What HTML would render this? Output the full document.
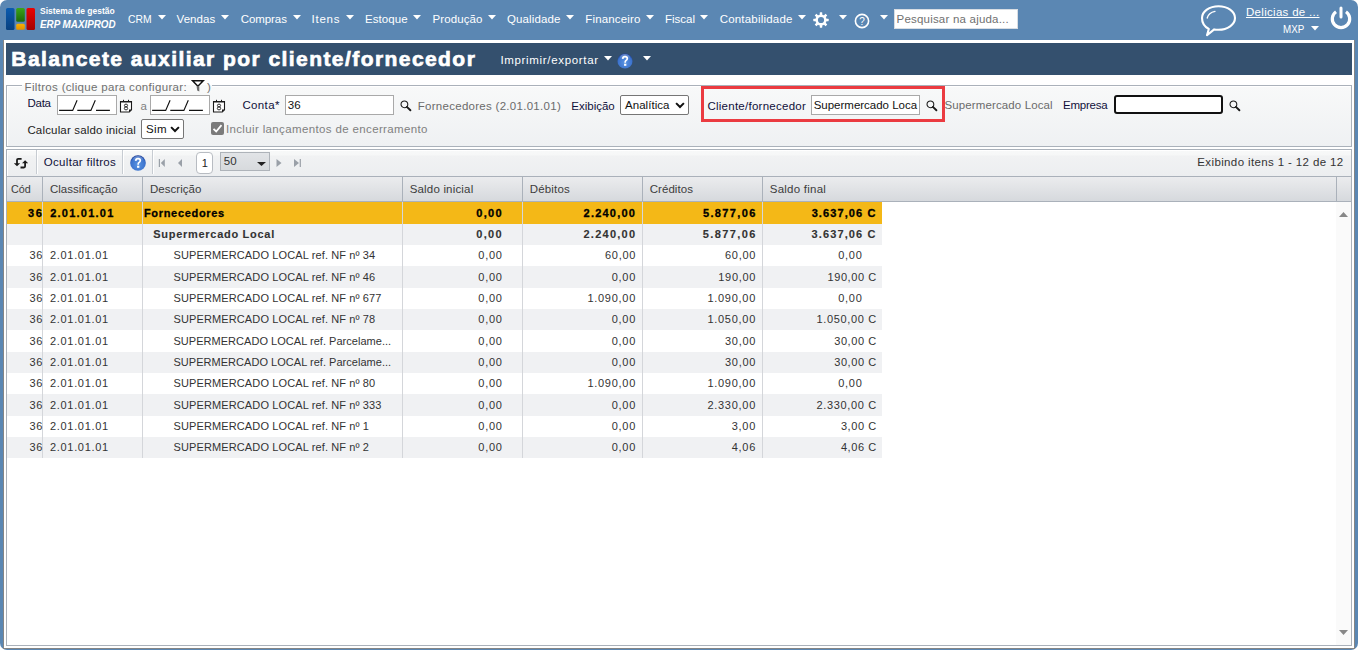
<!DOCTYPE html><html><head><meta charset="utf-8"><style>
*{box-sizing:border-box}
html,body{margin:0;padding:0;width:1358px;height:650px;overflow:hidden;background:#fff;font-family:"Liberation Sans",sans-serif}
#win{position:absolute;left:0;top:0;width:1358px;height:650px;background:#5b87b3;border-radius:7px;overflow:hidden}
.t{position:absolute;white-space:nowrap;line-height:1;font-family:"Liberation Sans",sans-serif}
.b{position:absolute}
svg{position:absolute;overflow:visible}
</style></head><body><div id="win"><svg style="left:0;top:0" width="40" height="40">
<defs>
<linearGradient id="lgB" x1="0" y1="0" x2="0" y2="1"><stop offset="0" stop-color="#0b5bb0"/><stop offset="1" stop-color="#08407f"/></linearGradient>
<linearGradient id="lgG" x1="0" y1="0" x2="0" y2="1"><stop offset="0" stop-color="#3ba51a"/><stop offset="1" stop-color="#1d6a09"/></linearGradient>
<linearGradient id="lgY" x1="0" y1="0" x2="0" y2="1"><stop offset="0" stop-color="#f7b000"/><stop offset="1" stop-color="#e39000"/></linearGradient>
<linearGradient id="lgR" x1="0" y1="0" x2="0" y2="1"><stop offset="0" stop-color="#ea0303"/><stop offset="1" stop-color="#a30202"/></linearGradient>
</defs>
<rect x="6" y="8" width="8.5" height="22" rx="1.5" fill="url(#lgB)"/>
<rect x="16.2" y="8" width="8.6" height="13.8" rx="1.5" fill="url(#lgG)"/>
<rect x="16.2" y="23.8" width="8.6" height="6" rx="1.5" fill="url(#lgY)"/>
<rect x="26.5" y="8" width="8.5" height="22" rx="1.5" fill="url(#lgR)"/>
</svg>
<div class="t" style="left:40.00px;top:7.31px;font-size:9.2px;color:#fff;font-weight:bold;transform:scaleX(0.9252);transform-origin:0.00px 0;">Sistema de gestão</div>
<div class="t" style="left:40.00px;top:19.19px;font-size:11px;color:#fff;font-weight:bold;font-style:italic;transform:scaleX(0.8940);transform-origin:0.00px 0;">ERP MAXIPROD</div>
<div class="t" style="left:128.30px;top:13.97px;font-size:11.5px;color:#fff;transform:scaleX(0.8981);transform-origin:0.00px 0;">CRM</div>
<svg style="left:158px;top:14.8px" width="8" height="4.5"><path d="M0 0H8L4.0 4.5Z" fill="#fff"/></svg>
<div class="t" style="left:176.60px;top:13.97px;font-size:11.5px;color:#fff;letter-spacing:0.036px;">Vendas</div>
<svg style="left:221px;top:14.8px" width="8" height="4.5"><path d="M0 0H8L4.0 4.5Z" fill="#fff"/></svg>
<div class="t" style="left:240.70px;top:13.97px;font-size:11.5px;color:#fff;letter-spacing:-0.067px;">Compras</div>
<svg style="left:292.8px;top:14.8px" width="8" height="4.5"><path d="M0 0H8L4.0 4.5Z" fill="#fff"/></svg>
<div class="t" style="left:311.50px;top:13.97px;font-size:11.5px;color:#fff;letter-spacing:0.755px;">Itens</div>
<svg style="left:345.6px;top:14.8px" width="8" height="4.5"><path d="M0 0H8L4.0 4.5Z" fill="#fff"/></svg>
<div class="t" style="left:365.00px;top:13.97px;font-size:11.5px;color:#fff;letter-spacing:0.083px;">Estoque</div>
<svg style="left:413px;top:14.8px" width="8" height="4.5"><path d="M0 0H8L4.0 4.5Z" fill="#fff"/></svg>
<div class="t" style="left:432.50px;top:13.97px;font-size:11.5px;color:#fff;letter-spacing:0.095px;">Produção</div>
<svg style="left:488px;top:14.8px" width="8" height="4.5"><path d="M0 0H8L4.0 4.5Z" fill="#fff"/></svg>
<div class="t" style="left:507.00px;top:13.97px;font-size:11.5px;color:#fff;letter-spacing:0.121px;">Qualidade</div>
<svg style="left:565.6px;top:14.8px" width="8" height="4.5"><path d="M0 0H8L4.0 4.5Z" fill="#fff"/></svg>
<div class="t" style="left:585.30px;top:13.97px;font-size:11.5px;color:#fff;letter-spacing:0.156px;">Financeiro</div>
<svg style="left:646px;top:14.8px" width="8" height="4.5"><path d="M0 0H8L4.0 4.5Z" fill="#fff"/></svg>
<div class="t" style="left:665.00px;top:13.97px;font-size:11.5px;color:#fff;letter-spacing:-0.015px;">Fiscal</div>
<svg style="left:700px;top:14.8px" width="8" height="4.5"><path d="M0 0H8L4.0 4.5Z" fill="#fff"/></svg>
<div class="t" style="left:719.70px;top:13.97px;font-size:11.5px;color:#fff;letter-spacing:0.197px;">Contabilidade</div>
<svg style="left:797.8px;top:14.8px" width="8" height="4.5"><path d="M0 0H8L4.0 4.5Z" fill="#fff"/></svg>
<svg style="left:812px;top:11px" width="18" height="18" viewBox="0 0 18 18"><g transform="translate(9,9)" fill="#fff"><circle r="4.35" fill="none" stroke="#fff" stroke-width="2.5"/><rect x="-1.25" y="-7.7" width="2.5" height="3.2" rx="0.4" transform="rotate(0)"/><rect x="-1.25" y="-7.7" width="2.5" height="3.2" rx="0.4" transform="rotate(45)"/><rect x="-1.25" y="-7.7" width="2.5" height="3.2" rx="0.4" transform="rotate(90)"/><rect x="-1.25" y="-7.7" width="2.5" height="3.2" rx="0.4" transform="rotate(135)"/><rect x="-1.25" y="-7.7" width="2.5" height="3.2" rx="0.4" transform="rotate(180)"/><rect x="-1.25" y="-7.7" width="2.5" height="3.2" rx="0.4" transform="rotate(225)"/><rect x="-1.25" y="-7.7" width="2.5" height="3.2" rx="0.4" transform="rotate(270)"/><rect x="-1.25" y="-7.7" width="2.5" height="3.2" rx="0.4" transform="rotate(315)"/></g></svg>
<svg style="left:839.3px;top:14.8px" width="8" height="4.5"><path d="M0 0H8L4.0 4.5Z" fill="#fff"/></svg>
<svg style="left:854px;top:12.5px" width="16" height="16" viewBox="0 0 16 16"><circle cx="8" cy="8" r="6.6" fill="none" stroke="#fff" stroke-width="1.6"/><text x="8" y="12" font-family="Liberation Sans" font-size="10" fill="#fff" text-anchor="middle">?</text></svg>
<svg style="left:880px;top:14.8px" width="8" height="4.5"><path d="M0 0H8L4.0 4.5Z" fill="#fff"/></svg>
<div class="b" style="left:894px;top:9px;width:124px;height:20px;background:#fff;border:1px solid #d8dde3"></div>
<div class="t" style="left:896.50px;top:13.77px;font-size:11.5px;color:#707070;letter-spacing:0.208px;">Pesquisar na ajuda...</div>
<svg style="left:1200px;top:4px" width="38" height="34" viewBox="0 0 38 34"><path d="M18.5 2.2C27.6 2.2 35 7.5 35 14S27.6 25.8 18.5 25.8c-1.5 0-3-.1-4.3-.4L7 31.2l1.8-6.2C4.8 22.8 2 18.8 2 14 2 7.5 9.4 2.2 18.5 2.2z" fill="none" stroke="#fff" stroke-width="2.1" stroke-linejoin="round"/><path d="M7.2 14C8 10.8 11.2 8.2 15 7.4" fill="none" stroke="#fff" stroke-width="1.3" stroke-linecap="round"/></svg>
<div class="t" style="left:1246.00px;top:6.77px;font-size:11.5px;color:#fff;letter-spacing:0.298px;text-decoration:underline;">Delicias de ...</div>
<div class="t" style="left:1283.00px;top:23.77px;font-size:11.5px;color:#fff;transform:scaleX(0.8515);transform-origin:0.00px 0;">MXP</div>
<svg style="left:1311px;top:25.5px" width="8" height="4.5"><path d="M0 0H8L4.0 4.5Z" fill="#fff"/></svg>
<svg style="left:1328px;top:5px" width="26" height="26" viewBox="0 0 26 26"><path d="M8.01 6.77A8.7 8.7 0 1 0 17.99 6.77" fill="none" stroke="#fff" stroke-width="3.2"/><path d="M13 2.9V12" stroke="#fff" stroke-width="3" stroke-linecap="round"/></svg>
<div class="b" style="left:3px;top:40px;width:1352px;height:609px;background:#fff;border-left:1px solid #858585;border-right:1px solid #858585;border-bottom:1px solid #858585"></div>
<div class="b" style="left:6px;top:43px;width:1346px;height:32px;background:#34506e"></div>
<div class="t" style="left:11.35px;top:48.42px;font-size:21px;color:#fff;font-weight:bold;letter-spacing:1.433px;-webkit-text-stroke:0.7px #fff;">Balancete auxiliar por cliente/fornecedor</div>
<div class="t" style="left:500.40px;top:54.97px;font-size:11.5px;color:#fff;letter-spacing:0.677px;">Imprimir/exportar</div>
<svg style="left:603.7px;top:56px" width="8" height="4.5"><path d="M0 0H8L4.0 4.5Z" fill="#fff"/></svg>
<svg style="left:617px;top:53px" width="16" height="16" viewBox="0 0 16 16"><defs><radialGradient id="hb" cx="0.5" cy="0.62" r="0.6"><stop offset="0" stop-color="#5b95e2"/><stop offset="0.78" stop-color="#3b72cd"/><stop offset="1" stop-color="#1c3f99"/></radialGradient><linearGradient id="hh" x1="0" y1="0" x2="0" y2="1"><stop offset="0" stop-color="#fff" stop-opacity="0.3"/><stop offset="1" stop-color="#fff" stop-opacity="0"/></linearGradient></defs><circle cx="8" cy="8" r="7.6" fill="url(#hb)"/><ellipse cx="8" cy="4" rx="5" ry="3" fill="url(#hh)"/><path d="M5.7 5.9Q5.8 3.6 8 3.6Q10.3 3.6 10.3 5.6Q10.3 6.8 9 7.5Q8.2 7.9 8.2 9.1V9.7" fill="none" stroke="#fff" stroke-width="1.7"/><rect x="7.05" y="10.7" width="2.3" height="2.1" fill="#fff"/></svg>
<svg style="left:643px;top:56px" width="8" height="4.5"><path d="M0 0H8L4.0 4.5Z" fill="#fff"/></svg>
<div class="b" style="left:6px;top:85px;width:1346px;height:62px;border:1px solid #aab1ba;background:linear-gradient(#f8f9f9,#eff1f3);box-shadow:inset 1px 1px 0 #fff"></div>
<div class="b" style="left:22px;top:80px;width:190px;height:12px;background:linear-gradient(#fff 0,#fff 5px,#f8f9f9 5px)"></div>
<div class="t" style="left:24.60px;top:82.27px;font-size:11.5px;color:#707070;letter-spacing:0.319px;">Filtros (clique para configurar:</div>
<svg style="left:186px;top:76px" width="28" height="20" viewBox="0 0 28 20"><path d="M6.6 4.8H17.2L11.9 10.2Z" fill="none" stroke="#111" stroke-width="1.5" stroke-linejoin="miter"/><path d="M10.6 10.2H13.3V15.4L11.2 14.6Z" fill="#6a6a6a"/></svg>
<div class="t" style="left:207.00px;top:82.27px;font-size:11.5px;color:#707070;">)</div>
<div class="t" style="left:27.40px;top:97.57px;font-size:11.5px;color:#10103a;letter-spacing:-0.232px;">Data</div>
<div class="b" style="left:57px;top:95px;width:60px;height:20px;background:#fff;border:1px solid #a9a9a9"></div>
<svg style="left:57px;top:95px" width="60" height="20" viewBox="0 0 60 20"><path d="M2.1 15.4H15.7L20.1 5.3M20.3 15.4H33.9L38.3 5.3M39 15.4H52.9" fill="none" stroke="#111" stroke-width="1.15"/></svg>
<svg style="left:119px;top:98.5px" width="14" height="14" viewBox="0 0 14 14"><path d="M1.5 2.5H12.5V10.8L10.3 13H1.5Z" fill="#fff" stroke="#1a1a1a" stroke-width="1.1"/><path d="M1 1.9H13V3.4H1Z" fill="#1a1a1a"/><path d="M4.5 0.8V2.2M9.5 0.8V2.2" stroke="#1a1a1a" stroke-width="1"/><path d="M10 13L12.7 10.5H10Z" fill="#1a1a1a"/><ellipse cx="7" cy="6.5" rx="1.6" ry="1.4" fill="none" stroke="#1a1a1a" stroke-width="0.9"/><ellipse cx="7" cy="9.4" rx="1.7" ry="1.5" fill="none" stroke="#1a1a1a" stroke-width="0.9"/></svg>
<div class="t" style="left:140.50px;top:100.77px;font-size:11.5px;color:#808080;">a</div>
<div class="b" style="left:150px;top:95px;width:60px;height:20px;background:#fff;border:1px solid #a9a9a9"></div>
<svg style="left:150px;top:95px" width="60" height="20" viewBox="0 0 60 20"><path d="M2.1 15.4H15.7L20.1 5.3M20.3 15.4H33.9L38.3 5.3M39 15.4H52.9" fill="none" stroke="#111" stroke-width="1.15"/></svg>
<svg style="left:212px;top:98.5px" width="14" height="14" viewBox="0 0 14 14"><path d="M1.5 2.5H12.5V10.8L10.3 13H1.5Z" fill="#fff" stroke="#1a1a1a" stroke-width="1.1"/><path d="M1 1.9H13V3.4H1Z" fill="#1a1a1a"/><path d="M4.5 0.8V2.2M9.5 0.8V2.2" stroke="#1a1a1a" stroke-width="1"/><path d="M10 13L12.7 10.5H10Z" fill="#1a1a1a"/><ellipse cx="7" cy="6.5" rx="1.6" ry="1.4" fill="none" stroke="#1a1a1a" stroke-width="0.9"/><ellipse cx="7" cy="9.4" rx="1.7" ry="1.5" fill="none" stroke="#1a1a1a" stroke-width="0.9"/></svg>
<div class="t" style="left:242.40px;top:100.37px;font-size:11.5px;color:#10103a;letter-spacing:0.363px;">Conta*</div>
<div class="b" style="left:285px;top:95px;width:109px;height:20px;background:#fff;border:1px solid #a9a9a9"></div>
<div class="t" style="left:287.80px;top:99.67px;font-size:11.5px;color:#111;">36</div>
<svg style="left:399.5px;top:99.5px" width="12" height="12" viewBox="0 0 12 12"><circle cx="4.4" cy="4.3" r="3.4" fill="none" stroke="#1a1a1a" stroke-width="1.05"/><path d="M6.9 6.9L10.4 10.3" stroke="#1a1a1a" stroke-width="1.9" stroke-linecap="round"/></svg>
<div class="t" style="left:417.70px;top:100.87px;font-size:11.5px;color:#6b6b6b;letter-spacing:0.286px;">Fornecedores (2.01.01.01)</div>
<div class="t" style="left:571.30px;top:101.27px;font-size:11.5px;color:#10103a;letter-spacing:-0.010px;">Exibição</div>
<div class="b" style="left:620px;top:95px;width:69px;height:20px;border-radius:2px;border:1px solid #767676;background:#fff"></div>
<div class="t" style="left:625.00px;top:99.87px;font-size:11.5px;color:#111;letter-spacing:0.049px;">Analítica</div>
<svg style="left:675px;top:101.5px" width="10" height="7" viewBox="0 0 10 7"><path d="M1.1 1.1L5 5L8.9 1.1" fill="none" stroke="#111" stroke-width="2"/></svg>
<div class="b" style="left:701px;top:86px;width:244px;height:36px;border:3px solid #eb3b41"></div>
<div class="t" style="left:707.40px;top:100.77px;font-size:11.5px;color:#10103a;letter-spacing:0.262px;">Cliente/fornecedor</div>
<div class="b" style="left:811px;top:95px;width:109px;height:20px;background:#fff;border:1px solid #a9a9a9"></div>
<div class="t" style="left:813.70px;top:99.77px;font-size:11.5px;color:#111;letter-spacing:-0.010px;">Supermercado Loca</div>
<svg style="left:925.5px;top:100px" width="12" height="12" viewBox="0 0 12 12"><circle cx="4.4" cy="4.3" r="3.4" fill="none" stroke="#1a1a1a" stroke-width="1.05"/><path d="M6.9 6.9L10.4 10.3" stroke="#1a1a1a" stroke-width="1.9" stroke-linecap="round"/></svg>
<div class="t" style="left:944.40px;top:100.47px;font-size:11.5px;color:#6b6b6b;letter-spacing:0.126px;">Supermercado Local</div>
<div class="t" style="left:1063.00px;top:100.47px;font-size:11.5px;color:#10103a;letter-spacing:-0.237px;">Empresa</div>
<div class="b" style="left:1114px;top:95px;width:109px;height:19px;background:#fff;border:2px solid #111;border-radius:3px"></div>
<svg style="left:1228.5px;top:99.5px" width="12" height="12" viewBox="0 0 12 12"><circle cx="4.4" cy="4.3" r="3.4" fill="none" stroke="#1a1a1a" stroke-width="1.05"/><path d="M6.9 6.9L10.4 10.3" stroke="#1a1a1a" stroke-width="1.9" stroke-linecap="round"/></svg>
<div class="t" style="left:27.40px;top:125.37px;font-size:11.5px;color:#222;letter-spacing:0.168px;">Calcular saldo inicial</div>
<div class="b" style="left:141px;top:119px;width:43px;height:20px;border-radius:2px;border:1px solid #767676;background:#fff"></div>
<div class="t" style="left:146.10px;top:123.77px;font-size:11.5px;color:#111;letter-spacing:0.337px;">Sim</div>
<svg style="left:170px;top:125.5px" width="10" height="7" viewBox="0 0 10 7"><path d="M1.1 1.1L5 5L8.9 1.1" fill="none" stroke="#111" stroke-width="2"/></svg>
<svg style="left:211px;top:122px" width="13" height="13" viewBox="0 0 13 13"><rect x="0" y="0" width="13" height="13" rx="2" fill="#7b7b7b"/><path d="M2.5 6.8L5.2 9.5L10.5 3.2" fill="none" stroke="#fff" stroke-width="1.8"/></svg>
<div class="t" style="left:225.90px;top:123.97px;font-size:11.5px;color:#808080;letter-spacing:0.364px;">Incluir lançamentos de encerramento</div>
<div class="b" style="left:6px;top:149px;width:1346px;height:28px;border:1px solid #aab1ba;border-bottom:none;background:linear-gradient(#f8f9f9 0,#f6f7f7 5px,#f1f2f3 6px,#eceef0 100%);box-shadow:inset 1px 1px 0 #fff"></div>
<div class="b" style="left:36px;top:150px;width:1px;height:24px;background:#c7ccd2;box-shadow:1px 0 0 #fff"></div>
<div class="b" style="left:122px;top:150px;width:1px;height:24px;background:#c7ccd2;box-shadow:1px 0 0 #fff"></div>
<div class="b" style="left:152px;top:150px;width:1px;height:24px;background:#c7ccd2;box-shadow:1px 0 0 #fff"></div>
<svg style="left:10px;top:152px" width="24" height="20" viewBox="0 0 24 20"><path d="M7 12.5V8Q7 6.8 8.2 6.8H11.6" fill="none" stroke="#1a1a1a" stroke-width="1.8"/><path d="M3.8 11.2H10.2L7 14.2Z" fill="#1a1a1a"/><path d="M15.1 10V14.3Q15.1 15.5 13.9 15.5H10.5" fill="none" stroke="#1a1a1a" stroke-width="1.8"/><path d="M12 11.2H18.2L15.1 8.2Z" fill="#1a1a1a"/></svg>
<div class="t" style="left:43.80px;top:156.77px;font-size:11.5px;color:#10103a;letter-spacing:0.301px;">Ocultar filtros</div>
<svg style="left:130px;top:155px" width="16" height="16" viewBox="0 0 16 16"><circle cx="8" cy="8" r="7.8" fill="url(#hb)"/><ellipse cx="8" cy="4" rx="5" ry="3" fill="url(#hh)"/><path d="M5.7 5.9Q5.8 3.6 8 3.6Q10.3 3.6 10.3 5.6Q10.3 6.8 9 7.5Q8.2 7.9 8.2 9.1V9.7" fill="none" stroke="#fff" stroke-width="1.7"/><rect x="7.05" y="10.7" width="2.3" height="2.1" fill="#fff"/></svg>
<svg style="left:158px;top:158px" width="145" height="10" viewBox="0 0 145 10">
<path d="M1.4 1V9" stroke="#9aa0a8" stroke-width="1.2"/><path d="M6.8 1V9L2.8 5Z" fill="#9aa0a8"/>
<path d="M24 1V9L20 5Z" fill="#9aa0a8"/>
<path d="M118.5 1V9L123.5 5Z" fill="#9aa0a8"/>
<path d="M136 1V9L141 5Z" fill="#9aa0a8"/><path d="M142.3 1V9" stroke="#9aa0a8" stroke-width="1.2"/>
</svg>
<div class="b" style="left:196px;top:152px;width:17px;height:22px;background:#fff;border:1px solid #b8bcc2;border-radius:4px"></div>
<div class="t" style="left:201.70px;top:157.79px;font-size:11px;color:#222;">1</div>
<div class="b" style="left:220px;top:152px;width:50px;height:19px;background:linear-gradient(#e2e4e7,#d7dadd);border:1px solid #aeb3b9"></div>
<div class="t" style="left:223.80px;top:155.77px;font-size:11.5px;color:#333;">50</div>
<svg style="left:256.7px;top:161.5px" width="9" height="4"><path d="M0 0H9L4.5 4Z" fill="#222"/></svg>
<div class="t" style="left:1197.30px;top:156.77px;font-size:11.5px;color:#333;letter-spacing:0.374px;">Exibindo itens 1 - 12 de 12</div>
<div class="b" style="left:6px;top:176px;width:1346px;height:470px;border:1px solid #aab1ba;border-top:none;background:#fff"></div>
<div class="b" style="left:7px;top:176px;width:1344px;height:26px;background:linear-gradient(#ebecee,#d6d9dd);border-top:1px solid #aab1ba;border-bottom:1px solid #aab1ba"></div>
<div class="b" style="left:42px;top:177px;width:1px;height:24px;background:#aab1ba"></div>
<div class="b" style="left:142px;top:177px;width:1px;height:24px;background:#aab1ba"></div>
<div class="b" style="left:402px;top:177px;width:1px;height:24px;background:#aab1ba"></div>
<div class="b" style="left:522px;top:177px;width:1px;height:24px;background:#aab1ba"></div>
<div class="b" style="left:642px;top:177px;width:1px;height:24px;background:#aab1ba"></div>
<div class="b" style="left:762px;top:177px;width:1px;height:24px;background:#aab1ba"></div>
<div class="b" style="left:1336px;top:177px;width:1px;height:24px;background:#aab1ba"></div>
<div class="t" style="left:10.60px;top:183.77px;font-size:11.5px;color:#3c3c3c;transform:scaleX(0.9372);transform-origin:0.00px 0;">Cód</div>
<div class="t" style="left:50.00px;top:183.77px;font-size:11.5px;color:#3c3c3c;letter-spacing:-0.013px;">Classificação</div>
<div class="t" style="left:150.00px;top:183.77px;font-size:11.5px;color:#3c3c3c;letter-spacing:0.034px;">Descrição</div>
<div class="t" style="left:409.70px;top:183.77px;font-size:11.5px;color:#3c3c3c;letter-spacing:0.182px;">Saldo inicial</div>
<div class="t" style="left:529.80px;top:183.77px;font-size:11.5px;color:#3c3c3c;letter-spacing:0.160px;">Débitos</div>
<div class="t" style="left:649.70px;top:183.77px;font-size:11.5px;color:#3c3c3c;letter-spacing:0.061px;">Créditos</div>
<div class="t" style="left:769.80px;top:183.77px;font-size:11.5px;color:#3c3c3c;letter-spacing:0.235px;">Saldo final</div>
<div class="b" style="left:1336px;top:202px;width:15px;height:443px;background:#fafafa"></div>
<svg style="left:1339px;top:211.5px" width="9" height="5"><path d="M0 5H9L4.5 0Z" fill="#888"/></svg>
<svg style="left:1339px;top:630px" width="9" height="5"><path d="M0 0H9L4.5 5Z" fill="#888"/></svg>
<div class="b" style="left:7px;top:202px;width:875px;height:22px;background:#f4b817"></div>
<div class="b" style="left:7px;top:224px;width:875px;height:21px;background:#f0f1f3"></div>
<div class="b" style="left:7px;top:245px;width:875px;height:21px;background:#ffffff"></div>
<div class="b" style="left:7px;top:266px;width:875px;height:22px;background:#f0f1f3"></div>
<div class="b" style="left:7px;top:288px;width:875px;height:21px;background:#ffffff"></div>
<div class="b" style="left:7px;top:309px;width:875px;height:21px;background:#f0f1f3"></div>
<div class="b" style="left:7px;top:330px;width:875px;height:22px;background:#ffffff"></div>
<div class="b" style="left:7px;top:352px;width:875px;height:21px;background:#f0f1f3"></div>
<div class="b" style="left:7px;top:373px;width:875px;height:21px;background:#ffffff"></div>
<div class="b" style="left:7px;top:394px;width:875px;height:22px;background:#f0f1f3"></div>
<div class="b" style="left:7px;top:416px;width:875px;height:21px;background:#ffffff"></div>
<div class="b" style="left:7px;top:437px;width:875px;height:21px;background:#f0f1f3"></div>
<div class="b" style="left:42px;top:202px;width:1px;height:256.00px;background:#d4d6da"></div>
<div class="b" style="left:142px;top:202px;width:1px;height:256.00px;background:#d4d6da"></div>
<div class="b" style="left:402px;top:202px;width:1px;height:256.00px;background:#d4d6da"></div>
<div class="b" style="left:522px;top:202px;width:1px;height:256.00px;background:#d4d6da"></div>
<div class="b" style="left:642px;top:202px;width:1px;height:256.00px;background:#d4d6da"></div>
<div class="b" style="left:762px;top:202px;width:1px;height:256.00px;background:#d4d6da"></div>
<div class="t" style="left:28.09px;top:207.69px;font-size:11px;color:#000;font-weight:bold;letter-spacing:1.442px;-webkit-text-stroke:0.3px #000;">36</div>
<div class="t" style="left:50.15px;top:207.69px;font-size:11px;color:#000;font-weight:bold;letter-spacing:1.247px;-webkit-text-stroke:0.3px #000;">2.01.01.01</div>
<div class="t" style="left:143.95px;top:207.69px;font-size:11px;color:#000;font-weight:bold;letter-spacing:0.679px;-webkit-text-stroke:0.3px #000;">Fornecedores</div>
<div class="t" style="left:476.35px;top:207.69px;font-size:11px;color:#000;font-weight:bold;letter-spacing:1.269px;-webkit-text-stroke:0.3px #000;">0,00</div>
<div class="t" style="left:583.55px;top:207.69px;font-size:11px;color:#000;font-weight:bold;letter-spacing:1.228px;-webkit-text-stroke:0.3px #000;">2.240,00</div>
<div class="t" style="left:702.95px;top:207.69px;font-size:11px;color:#000;font-weight:bold;letter-spacing:1.371px;-webkit-text-stroke:0.3px #000;">5.877,06</div>
<div class="t" style="left:811.65px;top:207.69px;font-size:11px;color:#000;font-weight:bold;letter-spacing:1.103px;-webkit-text-stroke:0.3px #000;">3.637,06 C</div>
<div class="t" style="left:153.26px;top:229.19px;font-size:11px;color:#333;font-weight:bold;letter-spacing:0.713px;-webkit-text-stroke:0.12px #333;">Supermercado Local</div>
<div class="t" style="left:476.26px;top:229.19px;font-size:11px;color:#333;font-weight:bold;letter-spacing:1.329px;-webkit-text-stroke:0.12px #333;">0,00</div>
<div class="t" style="left:583.46px;top:229.19px;font-size:11px;color:#333;font-weight:bold;letter-spacing:1.254px;-webkit-text-stroke:0.12px #333;">2.240,00</div>
<div class="t" style="left:702.86px;top:229.19px;font-size:11px;color:#333;font-weight:bold;letter-spacing:1.397px;-webkit-text-stroke:0.12px #333;">5.877,06</div>
<div class="t" style="left:811.56px;top:229.19px;font-size:11px;color:#333;font-weight:bold;letter-spacing:1.123px;-webkit-text-stroke:0.12px #333;">3.637,06 C</div>
<div class="t" style="left:29.60px;top:250.19px;font-size:11px;color:#333;letter-spacing:0.482px;">36</div>
<div class="t" style="left:50.00px;top:250.19px;font-size:11px;color:#333;letter-spacing:0.681px;">2.01.01.01</div>
<div class="t" style="left:173.50px;top:250.19px;font-size:11px;color:#333;letter-spacing:0.120px;">SUPERMERCADO LOCAL ref. NF nº 34</div>
<div class="t" style="left:478.30px;top:250.19px;font-size:11px;color:#333;letter-spacing:0.736px;">0,00</div>
<div class="t" style="left:605.00px;top:250.19px;font-size:11px;color:#333;letter-spacing:0.698px;">60,00</div>
<div class="t" style="left:725.00px;top:250.19px;font-size:11px;color:#333;letter-spacing:0.698px;">60,00</div>
<div class="t" style="left:838.20px;top:250.19px;font-size:11px;color:#333;letter-spacing:0.736px;">0,00</div>
<div class="t" style="left:29.60px;top:271.69px;font-size:11px;color:#333;letter-spacing:0.482px;">36</div>
<div class="t" style="left:50.00px;top:271.69px;font-size:11px;color:#333;letter-spacing:0.681px;">2.01.01.01</div>
<div class="t" style="left:173.50px;top:271.69px;font-size:11px;color:#333;letter-spacing:0.120px;">SUPERMERCADO LOCAL ref. NF nº 46</div>
<div class="t" style="left:478.30px;top:271.69px;font-size:11px;color:#333;letter-spacing:0.736px;">0,00</div>
<div class="t" style="left:611.70px;top:271.69px;font-size:11px;color:#333;letter-spacing:0.736px;">0,00</div>
<div class="t" style="left:718.30px;top:271.69px;font-size:11px;color:#333;letter-spacing:0.675px;">190,00</div>
<div class="t" style="left:827.50px;top:271.69px;font-size:11px;color:#333;letter-spacing:0.586px;">190,00 C</div>
<div class="t" style="left:29.60px;top:293.19px;font-size:11px;color:#333;letter-spacing:0.482px;">36</div>
<div class="t" style="left:50.00px;top:293.19px;font-size:11px;color:#333;letter-spacing:0.681px;">2.01.01.01</div>
<div class="t" style="left:173.50px;top:293.19px;font-size:11px;color:#333;letter-spacing:0.120px;">SUPERMERCADO LOCAL ref. NF nº 677</div>
<div class="t" style="left:478.30px;top:293.19px;font-size:11px;color:#333;letter-spacing:0.736px;">0,00</div>
<div class="t" style="left:587.40px;top:293.19px;font-size:11px;color:#333;letter-spacing:0.728px;">1.090,00</div>
<div class="t" style="left:707.40px;top:293.19px;font-size:11px;color:#333;letter-spacing:0.728px;">1.090,00</div>
<div class="t" style="left:838.20px;top:293.19px;font-size:11px;color:#333;letter-spacing:0.736px;">0,00</div>
<div class="t" style="left:29.60px;top:314.19px;font-size:11px;color:#333;letter-spacing:0.482px;">36</div>
<div class="t" style="left:50.00px;top:314.19px;font-size:11px;color:#333;letter-spacing:0.681px;">2.01.01.01</div>
<div class="t" style="left:173.50px;top:314.19px;font-size:11px;color:#333;letter-spacing:0.120px;">SUPERMERCADO LOCAL ref. NF nº 78</div>
<div class="t" style="left:478.30px;top:314.19px;font-size:11px;color:#333;letter-spacing:0.736px;">0,00</div>
<div class="t" style="left:611.70px;top:314.19px;font-size:11px;color:#333;letter-spacing:0.736px;">0,00</div>
<div class="t" style="left:707.40px;top:314.19px;font-size:11px;color:#333;letter-spacing:0.728px;">1.050,00</div>
<div class="t" style="left:816.60px;top:314.19px;font-size:11px;color:#333;letter-spacing:0.647px;">1.050,00 C</div>
<div class="t" style="left:29.60px;top:335.69px;font-size:11px;color:#333;letter-spacing:0.482px;">36</div>
<div class="t" style="left:50.00px;top:335.69px;font-size:11px;color:#333;letter-spacing:0.681px;">2.01.01.01</div>
<div class="t" style="left:173.50px;top:335.69px;font-size:11px;color:#333;letter-spacing:0.030px;">SUPERMERCADO LOCAL ref. Parcelame...</div>
<div class="t" style="left:478.30px;top:335.69px;font-size:11px;color:#333;letter-spacing:0.736px;">0,00</div>
<div class="t" style="left:611.70px;top:335.69px;font-size:11px;color:#333;letter-spacing:0.736px;">0,00</div>
<div class="t" style="left:725.00px;top:335.69px;font-size:11px;color:#333;letter-spacing:0.698px;">30,00</div>
<div class="t" style="left:834.20px;top:335.69px;font-size:11px;color:#333;letter-spacing:0.586px;">30,00 C</div>
<div class="t" style="left:29.60px;top:357.19px;font-size:11px;color:#333;letter-spacing:0.482px;">36</div>
<div class="t" style="left:50.00px;top:357.19px;font-size:11px;color:#333;letter-spacing:0.681px;">2.01.01.01</div>
<div class="t" style="left:173.50px;top:357.19px;font-size:11px;color:#333;letter-spacing:0.030px;">SUPERMERCADO LOCAL ref. Parcelame...</div>
<div class="t" style="left:478.30px;top:357.19px;font-size:11px;color:#333;letter-spacing:0.736px;">0,00</div>
<div class="t" style="left:611.70px;top:357.19px;font-size:11px;color:#333;letter-spacing:0.736px;">0,00</div>
<div class="t" style="left:725.00px;top:357.19px;font-size:11px;color:#333;letter-spacing:0.698px;">30,00</div>
<div class="t" style="left:834.20px;top:357.19px;font-size:11px;color:#333;letter-spacing:0.586px;">30,00 C</div>
<div class="t" style="left:29.60px;top:378.19px;font-size:11px;color:#333;letter-spacing:0.482px;">36</div>
<div class="t" style="left:50.00px;top:378.19px;font-size:11px;color:#333;letter-spacing:0.681px;">2.01.01.01</div>
<div class="t" style="left:173.50px;top:378.19px;font-size:11px;color:#333;letter-spacing:0.120px;">SUPERMERCADO LOCAL ref. NF nº 80</div>
<div class="t" style="left:478.30px;top:378.19px;font-size:11px;color:#333;letter-spacing:0.736px;">0,00</div>
<div class="t" style="left:587.40px;top:378.19px;font-size:11px;color:#333;letter-spacing:0.728px;">1.090,00</div>
<div class="t" style="left:707.40px;top:378.19px;font-size:11px;color:#333;letter-spacing:0.728px;">1.090,00</div>
<div class="t" style="left:838.20px;top:378.19px;font-size:11px;color:#333;letter-spacing:0.736px;">0,00</div>
<div class="t" style="left:29.60px;top:399.69px;font-size:11px;color:#333;letter-spacing:0.482px;">36</div>
<div class="t" style="left:50.00px;top:399.69px;font-size:11px;color:#333;letter-spacing:0.681px;">2.01.01.01</div>
<div class="t" style="left:173.50px;top:399.69px;font-size:11px;color:#333;letter-spacing:0.120px;">SUPERMERCADO LOCAL ref. NF nº 333</div>
<div class="t" style="left:478.30px;top:399.69px;font-size:11px;color:#333;letter-spacing:0.736px;">0,00</div>
<div class="t" style="left:611.70px;top:399.69px;font-size:11px;color:#333;letter-spacing:0.736px;">0,00</div>
<div class="t" style="left:707.40px;top:399.69px;font-size:11px;color:#333;letter-spacing:0.728px;">2.330,00</div>
<div class="t" style="left:816.60px;top:399.69px;font-size:11px;color:#333;letter-spacing:0.647px;">2.330,00 C</div>
<div class="t" style="left:29.60px;top:421.19px;font-size:11px;color:#333;letter-spacing:0.482px;">36</div>
<div class="t" style="left:50.00px;top:421.19px;font-size:11px;color:#333;letter-spacing:0.681px;">2.01.01.01</div>
<div class="t" style="left:173.50px;top:421.19px;font-size:11px;color:#333;letter-spacing:0.120px;">SUPERMERCADO LOCAL ref. NF nº 1</div>
<div class="t" style="left:478.30px;top:421.19px;font-size:11px;color:#333;letter-spacing:0.736px;">0,00</div>
<div class="t" style="left:611.70px;top:421.19px;font-size:11px;color:#333;letter-spacing:0.736px;">0,00</div>
<div class="t" style="left:731.70px;top:421.19px;font-size:11px;color:#333;letter-spacing:0.736px;">3,00</div>
<div class="t" style="left:840.90px;top:421.19px;font-size:11px;color:#333;letter-spacing:0.587px;">3,00 C</div>
<div class="t" style="left:29.60px;top:442.19px;font-size:11px;color:#333;letter-spacing:0.482px;">36</div>
<div class="t" style="left:50.00px;top:442.19px;font-size:11px;color:#333;letter-spacing:0.681px;">2.01.01.01</div>
<div class="t" style="left:173.50px;top:442.19px;font-size:11px;color:#333;letter-spacing:0.120px;">SUPERMERCADO LOCAL ref. NF nº 2</div>
<div class="t" style="left:478.30px;top:442.19px;font-size:11px;color:#333;letter-spacing:0.736px;">0,00</div>
<div class="t" style="left:611.70px;top:442.19px;font-size:11px;color:#333;letter-spacing:0.736px;">0,00</div>
<div class="t" style="left:731.70px;top:442.19px;font-size:11px;color:#333;letter-spacing:0.736px;">4,06</div>
<div class="t" style="left:840.90px;top:442.19px;font-size:11px;color:#333;letter-spacing:0.587px;">4,06 C</div></div></body></html>
